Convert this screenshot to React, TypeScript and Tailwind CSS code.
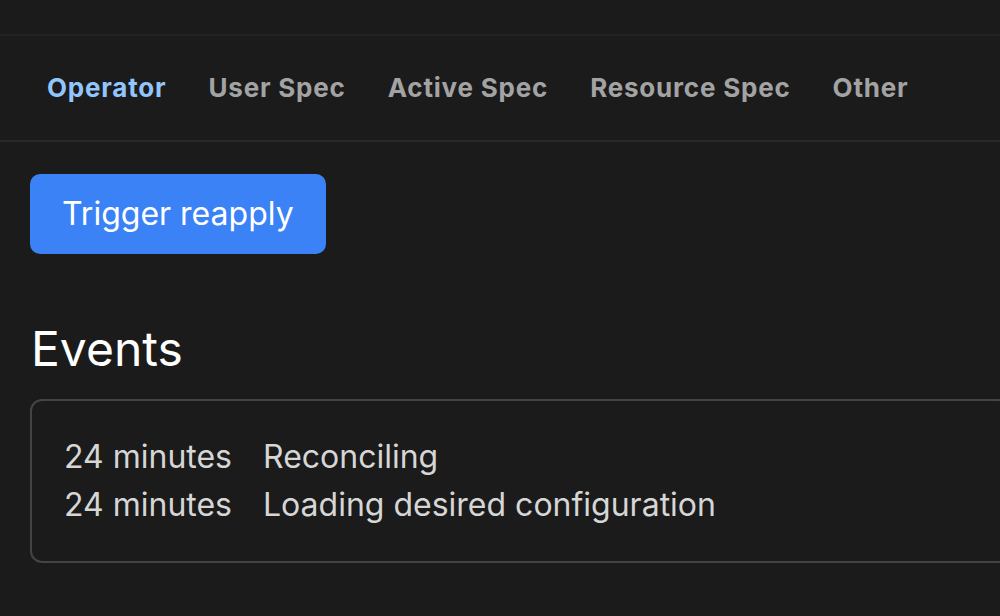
import React from "react";

const tabs = ["Operator", "User Spec", "Active Spec", "Resource Spec", "Other"];

const events = [
  ["24 minutes", "Reconciling"],
  ["24 minutes", "Loading desired configuration"],
];

export default function App() {
  return (
    <div
      className="w-[1000px] h-[616px] overflow-hidden bg-[#1b1b1b] text-white"
      style={{ fontFamily: "Inter, 'Noto Sans', sans-serif" }}
    >
      <div className="h-[34px]" />
      <div className="border-t-2 border-b-2 border-t-[#232323] border-b-[#292929]">
        <div className="flex h-[104px] items-center pl-[26px]">
          {tabs.map((t, i) => (
            <div
              key={t}
              className={`px-[21px] text-[26px] font-bold tracking-[0.8px] leading-none ${
                i === 0 ? "text-[#93c5fd]" : "text-[#a3a3a3]"
              }`}
            >
              {t}
            </div>
          ))}
        </div>
      </div>
      <div className="px-[30px] pt-[32px]">
        <button className="rounded-[10px] bg-[#3b82f6] px-8 py-4 text-[32px] leading-[48px] text-white">
          Trigger reapply
        </button>
        <h2 className="mt-[66px] ml-[1px] text-[48px] font-normal leading-[58px] text-white">
          Events
        </h2>
        <div className="mt-[21px] mr-[-40px] rounded-[12px] border-2 border-[#444444] p-8">
          <div className="grid grid-cols-[auto_1fr] gap-x-[31px] text-[32px] leading-[48px] text-[#d6d6d6]">
            {events.map(([a, b], i) => (
              <React.Fragment key={i}>
                <div>{a}</div>
                <div>{b}</div>
              </React.Fragment>
            ))}
          </div>
        </div>
      </div>
    </div>
  );
}
